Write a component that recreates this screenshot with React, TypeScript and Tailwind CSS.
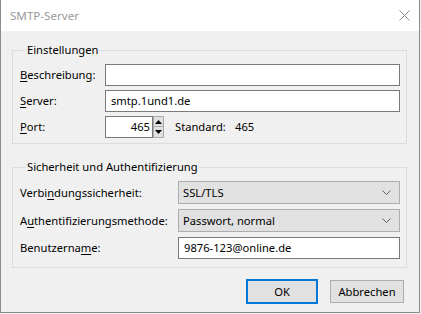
import React from "react";

function U({ children }: { children: React.ReactNode }) {
  return <span className="underline underline-offset-2 decoration-1">{children}</span>;
}

function Chevron() {
  return (
    <svg width="9" height="6" viewBox="0 0 9 6" className="block">
      <polyline points="0.5,0.5 4.5,4.5 8.5,0.5" fill="none" stroke="#606060" strokeWidth="1" />
    </svg>
  );
}

function Select({ value }: { value: string }) {
  return (
    <div className="w-[222px] h-[23px] bg-[#e1e1e1] border border-[#adadad] flex items-center justify-between pl-[4px] pr-[8px]">
      <span>{value}</span>
      <Chevron />
    </div>
  );
}

export default function App() {
  return (
    <div
      className="w-[421px] h-[314px] bg-[#f0f0f0] text-[11.2px] leading-[16px] text-black"
      style={{ fontFamily: '"Noto Sans", "Liberation Sans", sans-serif' }}
    >
      <div className="w-[420px] h-[313px] border-l border-r border-b border-[#8c8c8c] bg-[#f0f0f0] flex flex-col">
        {/* Title bar */}
        <div className="h-[31px] bg-white flex items-center justify-between pl-[9px] pr-[9px] text-[#999999] text-[11.6px]">
          <span>SMTP-Server</span>
          <svg width="11" height="11" viewBox="0 0 11 11" className="block">
            <line x1="0.5" y1="0.5" x2="10.5" y2="10.5" stroke="#8a8a8a" strokeWidth="1" />
            <line x1="10.5" y1="0.5" x2="0.5" y2="10.5" stroke="#8a8a8a" strokeWidth="1" />
          </svg>
        </div>

        {/* Group 1 */}
        <fieldset className="ml-[11px] mt-[11px] w-[395px] border border-[#dcdcdc] pl-[7px] pt-[6px] pb-[5px]">
          <legend className="ml-[6px] px-[1px]">Einstellungen</legend>
          <div className="flex flex-col gap-[4px]">
            <div className="flex items-center h-[22px]">
              <span className="w-[85px]"><U>B</U>eschreibung:</span>
              <div className="w-[295px] h-[22px] bg-white border border-[#7a7a7a]" />
            </div>
            <div className="flex items-center h-[22px]">
              <span className="w-[85px]"><U>S</U>erver:</span>
              <div className="w-[295px] h-[22px] bg-white border border-[#7a7a7a] flex items-center pl-[5px]">smtp.1und1.de</div>
            </div>
            <div className="flex items-center h-[22px]">
              <span className="w-[85px]"><U>P</U>ort:</span>
              <div className="w-[48px] h-[22px] bg-white border border-[#7a7a7a] flex items-center justify-end pr-[2px]">465</div>
              <div className="w-[11px] h-[22px] flex flex-col gap-0 bg-white">
                <div className="h-[11px] bg-[#e1e1e1] border border-[#adadad] flex items-center justify-center">
                  <svg width="7" height="4" viewBox="0 0 7 4"><polygon points="0,4 7,4 3.5,0" fill="#000" /></svg>
                </div>
                <div className="h-[11px] bg-[#e1e1e1] border border-[#adadad] border-t-0 flex items-center justify-center">
                  <svg width="7" height="4" viewBox="0 0 7 4"><polygon points="0,0 7,0 3.5,4" fill="#000" /></svg>
                </div>
              </div>
              <span className="ml-[11px] w-[60px]">Standard:</span>
              <span>465</span>
            </div>
          </div>
        </fieldset>

        {/* Group 2 */}
        <fieldset className="ml-[11px] mt-[15px] w-[395px] border border-[#dcdcdc] pl-[7px] pt-[6px] pb-[8px]">
          <legend className="ml-[6px] px-[1px]">Sicherheit und Authentifizierung</legend>
          <div className="flex flex-col gap-[5px]">
            <div className="flex items-center">
              <span className="w-[158px]">Verbi<U>n</U>dungssicherheit:</span>
              <Select value="SSL/TLS" />
            </div>
            <div className="flex items-center">
              <span className="w-[158px]">A<U>u</U>thentifizierungsmethode:</span>
              <Select value="Passwort, normal" />
            </div>
            <div className="flex items-center">
              <span className="w-[158px]">Benutzerna<U>m</U>e:</span>
              <div className="w-[222px] h-[22px] bg-white border border-[#7a7a7a] flex items-center pl-[5px]">9876-123@online.de</div>
            </div>
          </div>
        </fieldset>

        {/* Buttons */}
        <div className="mt-[11px] flex items-center justify-end gap-[12px] pr-[15px]">
          <button className="w-[72px] h-[25px] bg-[#e1e1e1] border-2 border-[#0078d7] flex items-center justify-center">OK</button>
          <button className="w-[74px] h-[23px] bg-[#e1e1e1] border border-[#adadad] flex items-center justify-center">Abbrechen</button>
        </div>
      </div>
    </div>
  );
}
